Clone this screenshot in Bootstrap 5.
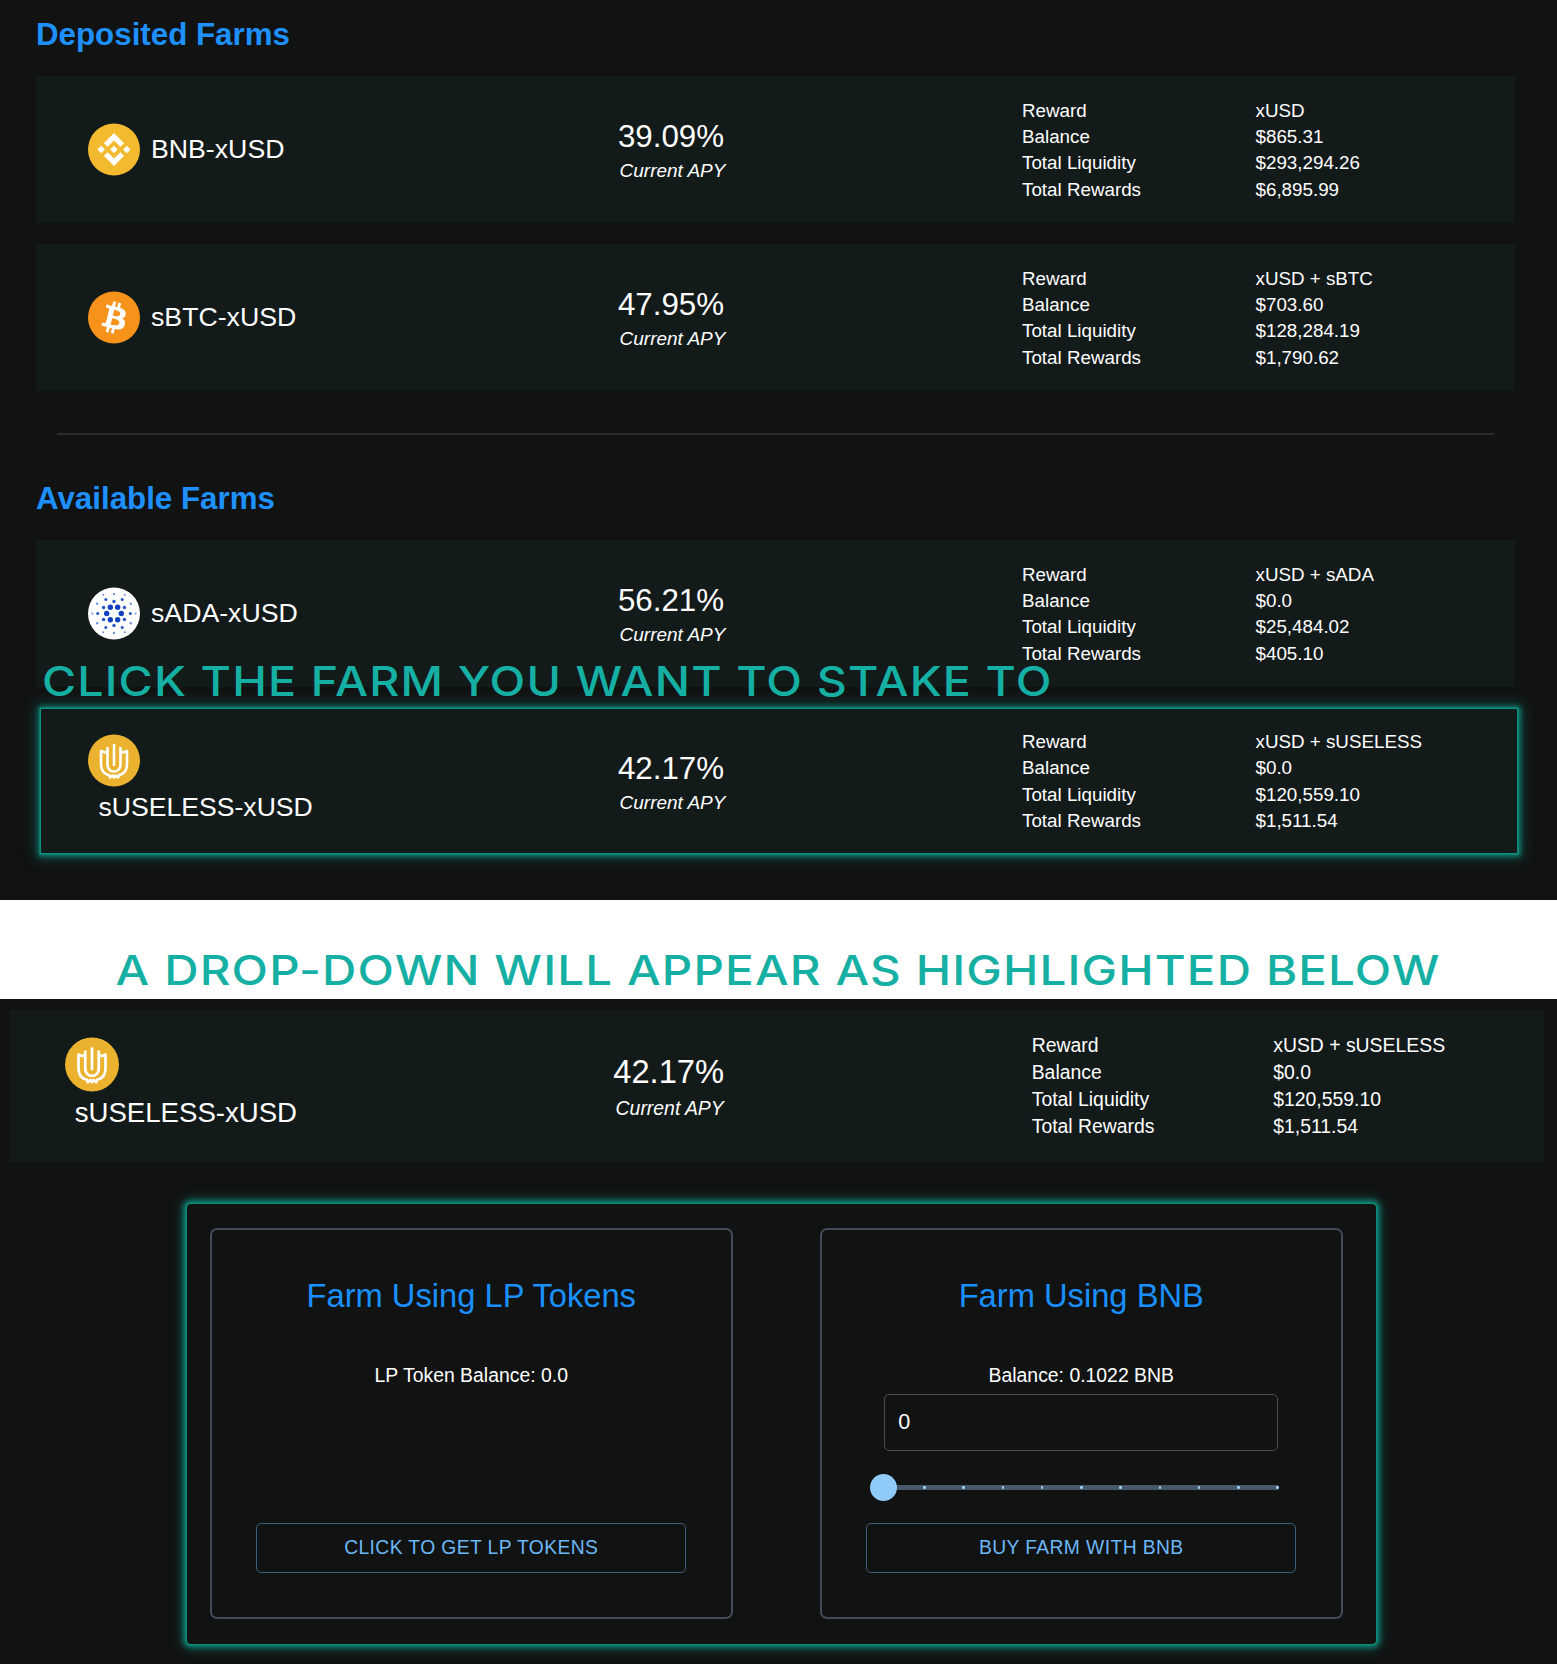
<!doctype html>
<html lang="en">
<head>
<meta charset="utf-8">
<title>Farms</title>
<link href="https://cdn.jsdelivr.net/npm/bootstrap@5.3.0/dist/css/bootstrap.min.css" rel="stylesheet">
<style>
html,body{margin:0;background:#111212;color:#fff;font-family:"Liberation Sans",Arial,sans-serif;}
.sheet{position:relative;height:900px;padding:13px 42px 0 36px;background:#111212;}
.sheet-h{margin:0 0 19px;height:44px;font:700 31.3px/44px "Liberation Sans",Arial,sans-serif;color:#1e90ff;}
.farm{display:flex;align-items:center;height:147px;padding-left:52px;background:#131a1a;margin-bottom:21px;}
.name-cell{width:483px;flex:none;}
.token{display:flex;align-items:center;gap:11px;font-size:26.7px;line-height:31px;}
.token svg{width:52px;height:53px;flex:none;display:block;}
.apy-cell{width:200px;flex:none;text-align:center;}
.apy-num{font-size:31.3px;line-height:43px;}
.apy-sub{font-size:19px;line-height:26px;font-style:italic;padding-left:3px;}
.stat-cell{margin-left:251px;font-size:18.8px;line-height:26.3px;padding-top:1.5px;}
.stat-row{display:flex;}
.stat-row>span:first-child{width:233.5px;flex:none;}
.rule{height:2px;margin:42px 21px 42px;background:#2a2b2c;}
.farm-lit{height:144px;margin:22px -2px 0 5px;padding-left:47px;background:#131a1a;box-shadow:0 0 0 1.5px #0e8f80,0 0 5px 3.5px rgba(14,139,124,.9),0 0 13px 6px rgba(14,139,124,.35);}
.stack{font-size:26.6px;line-height:32px;padding-bottom:5px;}
.stack svg{width:52px;height:53px;display:block;}
.stack div{margin:4.5px 0 0 10.5px;}
.callout{position:absolute;left:41.5px;top:656.5px;font:500 41px/48px Inter,sans-serif;color:#15b0a3;letter-spacing:1px;white-space:nowrap;transform:scaleX(1.136);transform-origin:left center;}
.band{height:99px;background:#fff;text-align:center;padding-top:45.5px;white-space:nowrap;}
.band span{display:inline-block;font:500 41px/48px Inter,sans-serif;color:#15b0a3;letter-spacing:1px;transform:scaleX(1.158);}
.lower{height:665px;padding:11px 13px 20px 10px;background:#111212;}
.farm-open{display:flex;align-items:center;height:152px;padding-left:54.7px;background:#131a1a;}
.farm-open .stack{font-size:27.6px;width:490px;flex:none;padding-bottom:7px;}
.farm-open .stack svg{width:54px;height:55px;}
.farm-open .stack div{margin:5px 0 0 10px;}
.farm-open .apy-cell{width:228px;padding-bottom:1.5px;}
.farm-open .apy-num{font-size:32.7px;}
.farm-open .apy-sub{font-size:19.4px;margin-top:1.5px;padding-left:2px;}
.farm-open .stat-cell{font-size:19.4px;line-height:27.2px;margin-left:249px;padding-top:0;}
.farm-open .stat-row>span:first-child{width:241.5px;}
.panel{display:flex;gap:87.5px;width:1189px;height:440px;margin:42px 0 0 177px;padding:24px 33px 25px 23px;border-radius:4px;background:#111212;box-shadow:0 0 0 1.5px #0c8a78,0 0 5px 3.5px rgba(14,139,124,.85),0 0 13px 6px rgba(14,139,124,.32);}
.tile{display:flex;flex-direction:column;align-items:center;width:522.5px;height:391px;border:2px solid #414b5a;border-radius:7px;padding:45.5px 0 44px;text-align:center;}
.tile-title{margin:0;font:400 32.7px/40px "Liberation Sans",Arial,sans-serif;color:#1a90ff;}
.tile-bal{margin-top:47px;font-size:19.4px;line-height:24px;}
.amount{width:394px;height:57.4px;margin-top:7.1px;padding:0 13px;border:1.5px solid #474c54;border-radius:5px;color:#fff;font-size:21.6px;line-height:54px;text-align:left;}
.slide{position:relative;display:flex;justify-content:space-between;align-items:center;width:395px;height:5px;margin-top:34px;border-radius:3px;background:#46586a;}
.slide i{width:2.5px;height:2.5px;border-radius:50%;background:#9fd0f5;}
.slide b{position:absolute;left:-14px;top:-11px;width:27px;height:27px;border-radius:50%;background:#90caf9;}
.go{width:430px;height:50px;margin-top:auto;padding:0;border:1.5px solid #3d5f80;border-radius:5px;background:transparent;color:#6cb8f6;font-size:19.3px;letter-spacing:.4px;line-height:46px;}
.go:hover{background:transparent;color:#6cb8f6;}
</style>
</head>
<body>
<svg width="0" height="0" class="d-block position-absolute">
<defs>
<g id="ic-bnb"><circle cx="26" cy="26.5" r="26" fill="#f3ba2f"/><g transform="translate(9.5 10) scale(.0132)" fill="#fff"><path d="M764.48,1050.52,1250,565l485.75,485.73,282.5-282.5L1250,0,482,768l282.49,282.5M0,1250,282.51,967.45,565,1249.94,282.49,1532.45Zm764.48,199.51L1250,1935l485.74-485.72,282.65,282.35-.14.15L1250,2500,482,1732l-.4-.4,282.91-282.12M1935,1250.12l282.51-282.51L2500,1250.1,2217.5,1532.61Z"/><path d="M1536.52,1249.85h.12L1250,963.19,1038.13,1175h0l-24.34,24.35-50.2,50.21-.39.4.39.41,286.4,286.39,286.66-286.66.14-.16-.26-.14"/></g></g>
<g id="ic-btc"><circle cx="26" cy="26.5" r="26" fill="#f7931a"/><g transform="translate(0 .5) scale(1.625)"><path fill="#fff" d="M23.189 14.02c.314-2.096-1.283-3.223-3.465-3.975l.708-2.84-1.728-.43-.69 2.765c-.454-.114-.92-.22-1.385-.326l.695-2.783L15.596 6l-.708 2.839c-.376-.086-.746-.17-1.104-.26l.002-.009-2.384-.595-.46 1.846s1.283.294 1.256.312c.7.175.826.638.805 1.006l-.806 3.235c.048.012.11.03.18.057l-.183-.045-1.13 4.532c-.086.212-.303.531-.793.41.018.025-1.256-.313-1.256-.313l-.858 1.978 2.25.561c.418.105.828.215 1.231.318l-.715 2.872 1.727.43.708-2.84c.472.127.93.245 1.378.357l-.706 2.828 1.728.43.715-2.866c2.948.558 5.164.333 6.097-2.333.752-2.146-.037-3.385-1.588-4.192 1.13-.26 1.98-1.003 2.207-2.538zm-3.95 5.538c-.533 2.147-4.148.986-5.32.695l.95-3.805c1.172.293 4.929.872 4.37 3.11zm.535-5.569c-.487 1.953-3.495.96-4.47.717l.86-3.45c.975.243 4.118.696 3.61 2.733z"/></g></g>
<g id="ic-ada"><circle cx="26" cy="26.5" r="26" fill="#fff"/><g transform="translate(26 26.5)"><g fill="#1040bd"><circle cx="7.3" r="2.7"/><circle cx="-7.3" r="2.7"/><circle cx="3.65" cy="6.3" r="2.7"/><circle cx="-3.65" cy="6.3" r="2.7"/><circle cx="3.65" cy="-6.3" r="2.7"/><circle cx="-3.65" cy="-6.3" r="2.7"/></g><g fill="#2755c6"><circle cx="10.4" cy="6" r="1.7"/><circle cy="12" r="1.7"/><circle cx="-10.4" cy="6" r="1.7"/><circle cx="-10.4" cy="-6" r="1.7"/><circle cy="-12" r="1.7"/><circle cx="10.4" cy="-6" r="1.7"/><circle cx="16.3" r="1.5"/><circle cx="-16.3" r="1.5"/><circle cx="8.2" cy="14.1" r="1.5"/><circle cx="-8.2" cy="14.1" r="1.5"/><circle cx="8.2" cy="-14.1" r="1.5"/><circle cx="-8.2" cy="-14.1" r="1.5"/></g><g fill="#6f8fdc"><circle cx="16.8" cy="9.7" r="1.2"/><circle cx="-16.8" cy="9.7" r="1.2"/><circle cx="16.8" cy="-9.7" r="1.2"/><circle cx="-16.8" cy="-9.7" r="1.2"/><circle cy="19.4" r="1.2"/><circle cy="-19.4" r="1.2"/><circle cx="21.6" r="1"/><circle cx="-21.6" r="1"/><circle cx="10.8" cy="18.7" r="1"/><circle cx="-10.8" cy="18.7" r="1"/><circle cx="10.8" cy="-18.7" r="1"/><circle cx="-10.8" cy="-18.7" r="1"/></g></g></g>
<g id="ic-use"><circle cx="26" cy="26.5" r="26" fill="#eab22e"/><g transform="translate(26 26)" fill="none" stroke="#fff" stroke-width="2.6" stroke-linejoin="round"><path d="M-6-9-8.5-7.5-13-9V4Q-13 12-7 14.5L-5 15-4 17.5-1.5 15.5 0 17.5 1.5 15.5 4 17.5 5 15 7 14.5Q13 12 13 4V-9L8.5-7.5 6-9"/><path d="M-6.5-13V5A6.5 6.5 0 0 0 6.5 5V-13"/><path d="M0-16V6"/></g></g>
</defs>
</svg>

<div class="sheet">
  <h2 class="sheet-h">Deposited Farms</h2>
  <div class="farm">
    <div class="name-cell"><div class="token"><svg viewBox="0 0 52 53"><use href="#ic-bnb"/></svg><span>BNB-xUSD</span></div></div>
    <div class="apy-cell"><div class="apy-num">39.09%</div><div class="apy-sub">Current APY</div></div>
    <div class="stat-cell">
      <div class="stat-row"><span>Reward</span><span>xUSD</span></div>
      <div class="stat-row"><span>Balance</span><span>$865.31</span></div>
      <div class="stat-row"><span>Total Liquidity</span><span>$293,294.26</span></div>
      <div class="stat-row"><span>Total Rewards</span><span>$6,895.99</span></div>
    </div>
  </div>
  <div class="farm mb-0">
    <div class="name-cell"><div class="token"><svg viewBox="0 0 52 53"><use href="#ic-btc"/></svg><span>sBTC-xUSD</span></div></div>
    <div class="apy-cell"><div class="apy-num">47.95%</div><div class="apy-sub">Current APY</div></div>
    <div class="stat-cell">
      <div class="stat-row"><span>Reward</span><span>xUSD + sBTC</span></div>
      <div class="stat-row"><span>Balance</span><span>$703.60</span></div>
      <div class="stat-row"><span>Total Liquidity</span><span>$128,284.19</span></div>
      <div class="stat-row"><span>Total Rewards</span><span>$1,790.62</span></div>
    </div>
  </div>
  <div class="rule"></div>
  <h2 class="sheet-h">Available Farms</h2>
  <div class="farm mb-0">
    <div class="name-cell"><div class="token"><svg viewBox="0 0 52 53"><use href="#ic-ada"/></svg><span>sADA-xUSD</span></div></div>
    <div class="apy-cell"><div class="apy-num">56.21%</div><div class="apy-sub">Current APY</div></div>
    <div class="stat-cell">
      <div class="stat-row"><span>Reward</span><span>xUSD + sADA</span></div>
      <div class="stat-row"><span>Balance</span><span>$0.0</span></div>
      <div class="stat-row"><span>Total Liquidity</span><span>$25,484.02</span></div>
      <div class="stat-row"><span>Total Rewards</span><span>$405.10</span></div>
    </div>
  </div>
  <div class="farm-lit d-flex align-items-center">
    <div class="name-cell stack"><svg viewBox="0 0 52 53"><use href="#ic-use"/></svg><div>sUSELESS-xUSD</div></div>
    <div class="apy-cell"><div class="apy-num">42.17%</div><div class="apy-sub">Current APY</div></div>
    <div class="stat-cell">
      <div class="stat-row"><span>Reward</span><span>xUSD + sUSELESS</span></div>
      <div class="stat-row"><span>Balance</span><span>$0.0</span></div>
      <div class="stat-row"><span>Total Liquidity</span><span>$120,559.10</span></div>
      <div class="stat-row"><span>Total Rewards</span><span>$1,511.54</span></div>
    </div>
  </div>
  <div class="callout">CLICK THE FARM YOU WANT TO STAKE TO</div>
</div>

<div class="band"><span>A DROP-DOWN WILL APPEAR AS HIGHLIGHTED BELOW</span></div>

<div class="lower">
  <div class="farm-open">
    <div class="stack"><svg viewBox="0 0 52 53"><use href="#ic-use"/></svg><div>sUSELESS-xUSD</div></div>
    <div class="apy-cell"><div class="apy-num">42.17%</div><div class="apy-sub">Current APY</div></div>
    <div class="stat-cell">
      <div class="stat-row"><span>Reward</span><span>xUSD + sUSELESS</span></div>
      <div class="stat-row"><span>Balance</span><span>$0.0</span></div>
      <div class="stat-row"><span>Total Liquidity</span><span>$120,559.10</span></div>
      <div class="stat-row"><span>Total Rewards</span><span>$1,511.54</span></div>
    </div>
  </div>
  <div class="panel">
    <div class="tile">
      <h3 class="tile-title">Farm Using LP Tokens</h3>
      <div class="tile-bal">LP Token Balance: 0.0</div>
      <button type="button" class="btn go">CLICK TO GET LP TOKENS</button>
    </div>
    <div class="tile">
      <h3 class="tile-title">Farm Using BNB</h3>
      <div class="tile-bal">Balance: 0.1022 BNB</div>
      <div class="amount">0</div>
      <div class="slide"><i></i><i></i><i></i><i></i><i></i><i></i><i></i><i></i><i></i><i></i><i></i><b></b></div>
      <button type="button" class="btn go">BUY FARM WITH BNB</button>
    </div>
  </div>
</div>
<script src="https://cdn.jsdelivr.net/npm/bootstrap@5.3.0/dist/js/bootstrap.bundle.min.js"></script>
</body>
</html>
